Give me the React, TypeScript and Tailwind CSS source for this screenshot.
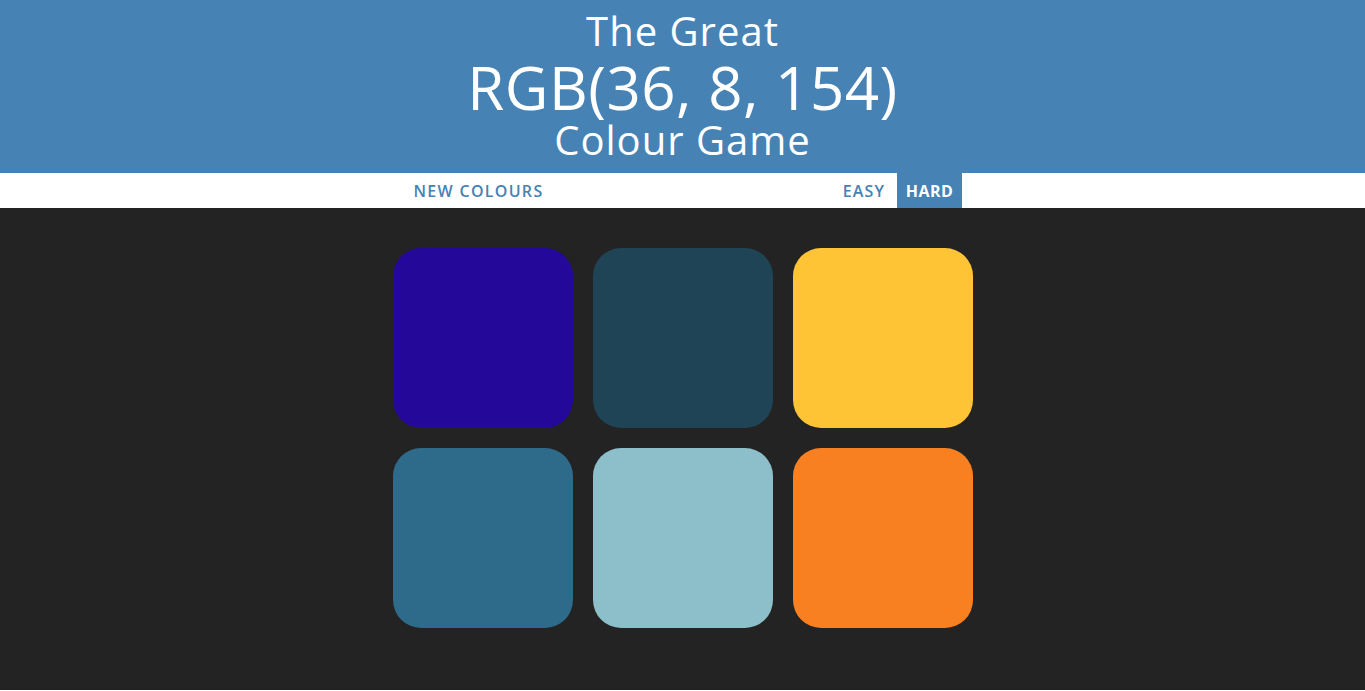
import { useState } from "react";

const squares = [
  "#24089a",
  "#1f4455",
  "#ffc435",
  "#2e6a8a",
  "#8dbfca",
  "#f98020",
];

export default function App() {
  const [mode, setMode] = useState("hard");

  return (
    <div className="bg-white font-['Open_Sans',sans-serif]">
      {/* Header */}
      <div className="h-[173px] bg-[#4682b4] text-white text-center flex flex-col items-center pt-[7px]">
        <div className="text-[40px] leading-[48px] tracking-[1px]">The Great</div>
        <div className="text-[60px] leading-[64px] tracking-[0.5px]">RGB(36, 8, 154)</div>
        <div className="text-[40px] leading-[42px] tracking-[1px]">Colour Game</div>
      </div>

      {/* Stripe */}
      <div className="h-[35px] bg-white flex justify-center items-stretch text-[16px]">
        <button className="w-[151px] text-[#4682b4] font-semibold uppercase tracking-[1.3px]">
          New Colours
        </button>
        <span className="w-[281px]" />
        <button
          onClick={() => setMode("easy")}
          className={`w-[58px] uppercase tracking-[1.2px] ${
            mode === "easy" ? "bg-[#4682b4] text-white font-bold" : "text-[#4682b4] font-semibold"
          }`}
        >
          Easy
        </button>
        <span className="w-[4px]" />
        <button
          onClick={() => setMode("hard")}
          className={`w-[65px] uppercase tracking-[0.5px] ${
            mode === "hard" ? "bg-[#4682b4] text-white font-bold" : "text-[#4682b4] font-semibold"
          }`}
        >
          Hard
        </button>
      </div>

      {/* Board */}
      <div className="h-[482px] bg-[#232323]">
        <div className="w-[600px] mx-auto pt-[40px] grid grid-cols-3 gap-[20px] px-[10px]">
          {squares.map((c, i) => (
            <div
              key={i}
              className="w-[180px] h-[180px] rounded-[28px]"
              style={{ backgroundColor: c }}
            />
          ))}
        </div>
      </div>
      <div className="h-[1px]" />
    </div>
  );
}
